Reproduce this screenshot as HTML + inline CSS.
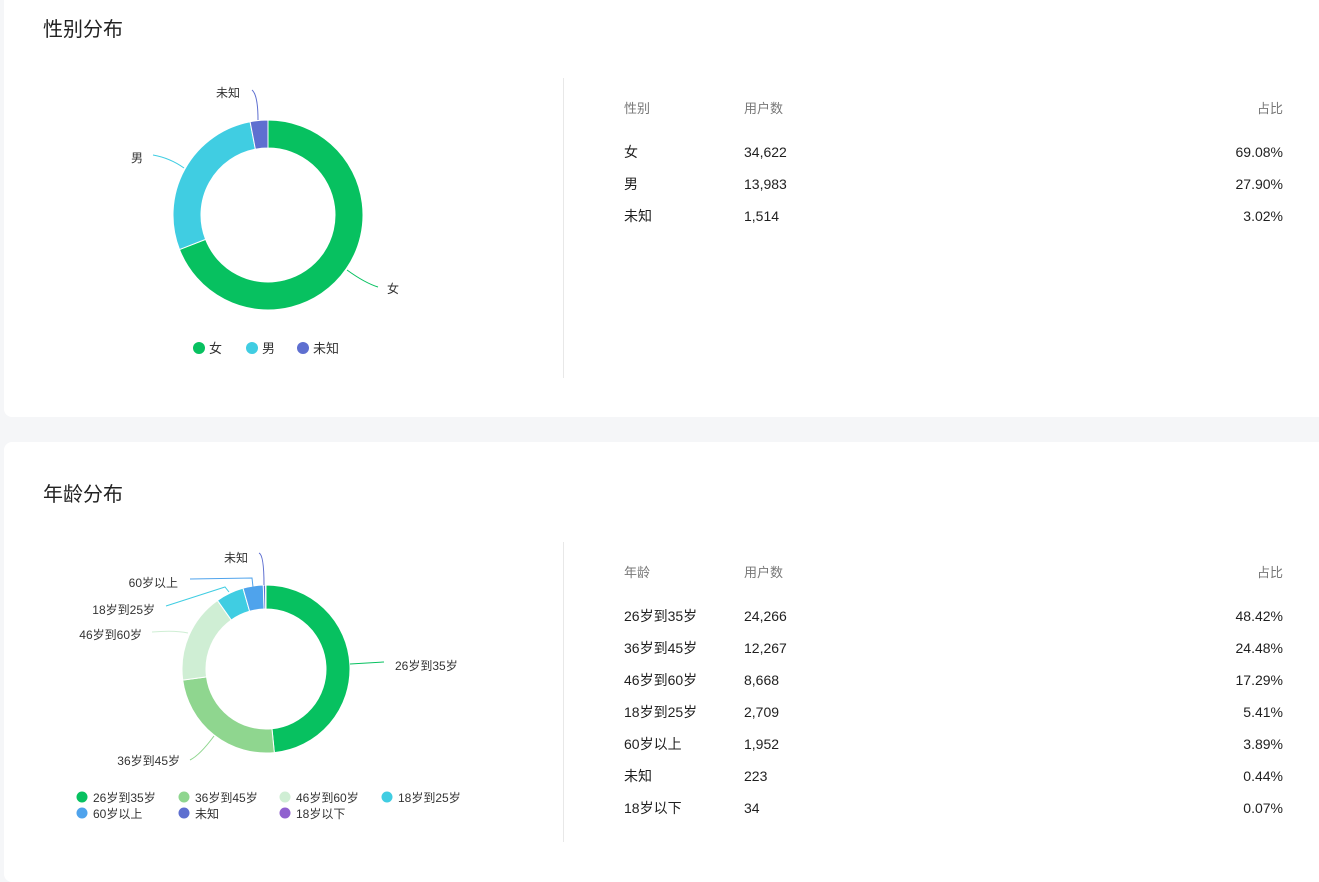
<!DOCTYPE html>
<html><head><meta charset="utf-8"><style>
body{margin:0;width:1319px;height:870px;background:#f5f6f8;font-family:"Liberation Sans","Noto Sans CJK SC",sans-serif;color:#1f1f1f;position:relative;overflow:hidden}
.card{position:absolute;left:4px;width:1330px;background:#fff;border-radius:8px}
.t{position:absolute;font-size:20px;color:#222}
.div{position:absolute;left:563px;width:1px;background:#e8e8e8}
.row{position:absolute;left:624px;width:659px;display:flex;align-items:baseline;font-size:14px;white-space:nowrap;line-height:20px}
.row .a{width:120px}.row .b{flex:1}.row .c{text-align:right}
.h{color:#777;font-size:13px}
svg{position:absolute;left:0;top:0}
</style></head><body>
<div class="card" style="top:-10px;height:427px"></div>
<div class="card" style="top:442px;height:440px"></div>
<div class="t" style="left:43px;top:13px">性别分布</div>
<div class="t" style="left:43px;top:478px">年龄分布</div>
<div class="div" style="top:78px;height:300px"></div>
<div class="div" style="top:542px;height:300px"></div>
<div id="tbl"></div>
<svg width="1319" height="870" id="s" font-family="Liberation Sans, Noto Sans CJK SC, sans-serif"></svg>
<script>
var s=document.getElementById('s'),h='';
function donut(cx,cy,R,r,vals,cols){var a=0,t=vals.reduce((x,y)=>x+y,0);
vals.forEach(function(v,i){var b=a+v/t*2*Math.PI;
function p(rr,an){return [cx+rr*Math.sin(an),cy-rr*Math.cos(an)]}
var l=(b-a)>Math.PI?1:0,p1=p(R,a),p2=p(R,b),p3=p(r,b),p4=p(r,a);
h+='<path d="M'+p1+'A'+R+','+R+' 0 '+l+' 1 '+p2+'L'+p3+'A'+r+','+r+' 0 '+l+' 0 '+p4+'Z" fill="'+cols[i]+'" stroke="#fff" stroke-width="1"/>';a=b;});}
donut(268,215,95,67,[34622,13983,1514],['#07c160','#40cde2','#5e6fd0']);
donut(266,669,84,60,[24266,12267,8668,2709,1952,223,34],['#07c160','#8fd68f','#cfeed4','#40cde2','#4fa3ec','#5e6fd0','#9061cf']);
function ln(d,c){h+='<path d="'+d+'" fill="none" stroke="'+c+'" stroke-width="1"/>'}
function tx(x,y,t,sz,anc){h+='<text x="'+x+'" y="'+y+'" font-size="'+(sz||12)+'" fill="#333" text-anchor="'+(anc||'start')+'">'+t+'</text>'}
ln('M347,270Q365,283 378,287','#07c160');tx(387,293,'女');
ln('M184,168Q170,158 153,155','#40cde2');tx(143,162,'男',12,'end');
ln('M258,120Q258,95 252,90','#5e6fd0');tx(240,97,'未知',12,'end');
ln('M350,664L384,662','#07c160');tx(395,670,'26岁到35岁');
ln('M214,736Q200,755 190,760','#8fd68f');tx(180,765,'36岁到45岁',12,'end');
ln('M188,633Q175,630 152,632','#cfeed4');tx(142,639,'46岁到60岁',12,'end');
ln('M229,592L225,587L166,606','#40cde2');tx(155,614,'18岁到25岁',12,'end');
ln('M253,587L252,578L190,579','#4fa3ec');tx(178,587,'60岁以上',12,'end');
ln('M264,585Q264,555 259,553','#5e6fd0');tx(248,562,'未知',12,'end');
[['女','#07c160',199],['男','#40cde2',252],['未知','#5e6fd0',303]].forEach(function(e){h+='<circle cx="'+e[2]+'" cy="348" r="6" fill="'+e[1]+'"/>';tx(e[2]+10,353,e[0],13)});
[['26岁到35岁','#07c160',82,797],['36岁到45岁','#8fd68f',184,797],['46岁到60岁','#cfeed4',285,797],['18岁到25岁','#40cde2',387,797],['60岁以上','#4fa3ec',82,813],['未知','#5e6fd0',184,813],['18岁以下','#9061cf',285,813]].forEach(function(e){h+='<circle cx="'+e[2]+'" cy="'+e[3]+'" r="5.5" fill="'+e[1]+'"/>';tx(e[2]+11,e[3]+5,e[0],12)});
s.innerHTML=h;
var T='';
function row(y,a,b,c,hd){T+='<div class="row'+(hd?' h':'')+'" style="top:'+y+'px"><span class="a">'+a+'</span><span class="b">'+b+'</span><span class="c">'+c+'</span></div>';}
row(99,'性别','用户数','占比',1);
[['女','34,622','69.08%'],['男','13,983','27.90%'],['未知','1,514','3.02%']].forEach(function(r,i){row(142+32*i,r[0],r[1],r[2])});
row(563,'年龄','用户数','占比',1);
[['26岁到35岁','24,266','48.42%'],['36岁到45岁','12,267','24.48%'],['46岁到60岁','8,668','17.29%'],['18岁到25岁','2,709','5.41%'],['60岁以上','1,952','3.89%'],['未知','223','0.44%'],['18岁以下','34','0.07%']].forEach(function(r,i){row(606+32*i,r[0],r[1],r[2])});
document.getElementById('tbl').innerHTML=T;
</script>
</body></html>
